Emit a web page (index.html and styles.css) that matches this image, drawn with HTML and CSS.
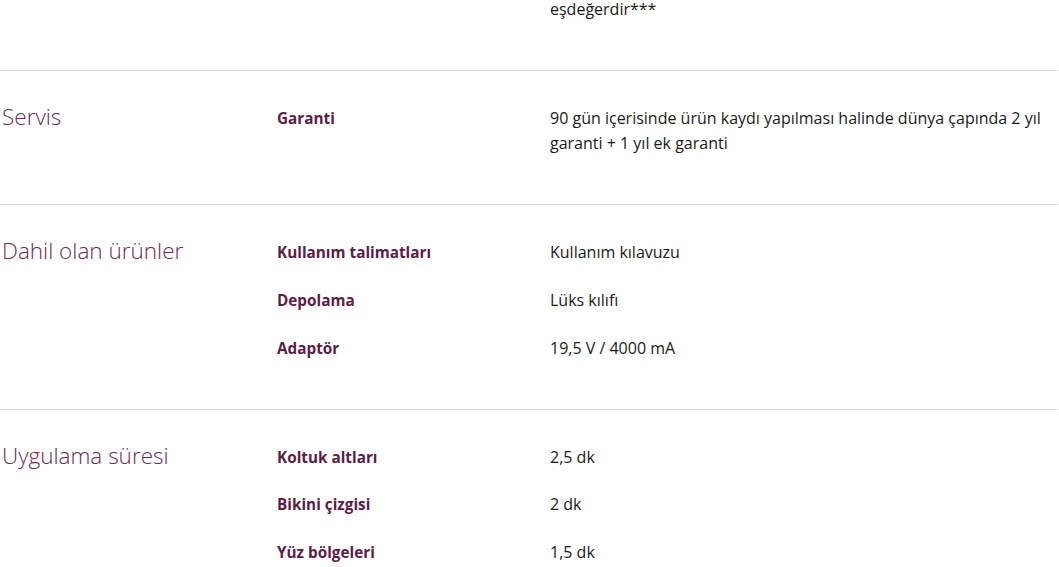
FILE: index.html
```html
<!DOCTYPE html>
<html lang="tr">
<head>
<meta charset="utf-8">
<link rel="stylesheet" href="styles.css">
</head>
<body>
<div class="specs">
  <section class="group group-top">
    <div class="title"></div>
    <div class="rows">
      <div class="row"><div class="label"></div><div class="value">eşdeğerdir***</div></div>
    </div>
  </section>
  <section class="group">
    <h3 class="title">Servis</h3>
    <div class="rows">
      <div class="row"><div class="label">Garanti</div><div class="value">90 gün içerisinde ürün kaydı yapılması halinde dünya çapında 2 yıl garanti + 1 yıl ek garanti</div></div>
    </div>
  </section>
  <section class="group">
    <h3 class="title">Dahil olan ürünler</h3>
    <div class="rows">
      <div class="row"><div class="label">Kullanım talimatları</div><div class="value">Kullanım kılavuzu</div></div>
      <div class="row"><div class="label">Depolama</div><div class="value">Lüks kılıfı</div></div>
      <div class="row"><div class="label">Adaptör</div><div class="value">19,5 V / 4000 mA</div></div>
    </div>
  </section>
  <section class="group">
    <h3 class="title">Uygulama süresi</h3>
    <div class="rows">
      <div class="row"><div class="label">Koltuk altları</div><div class="value">2,5 dk</div></div>
      <div class="row"><div class="label">Bikini çizgisi</div><div class="value">2 dk</div></div>
      <div class="row"><div class="label">Yüz bölgeleri</div><div class="value">1,5 dk</div></div>
    </div>
  </section>
</div>
</body>
</html>
```

FILE: styles.css
```css
html, body {
  margin: 0;
  padding: 0;
  background: #fff;
}
body {
  font-family: "Open Sans", "Noto Sans", sans-serif;
  color: #111;
}
.specs {
  width: 1058px;
}
.group {
  display: grid;
  grid-template-columns: 277px 1fr;
  padding: 35px 0 48px 0;
  border-top: 1px solid #d9d9d9;
}
.group-top {
  border-top: none;
  padding-top: 0;
  padding-bottom: 48px;
  margin-top: -3px;
}
.title {
  margin: 0 0 0 2px;
  font-weight: 300;
  font-size: 22.5px;
  line-height: 28px;
  color: #6a2a57;
  margin-top: -3px;
}
.rows {
  display: flex;
  flex-direction: column;
  gap: 22.8px;
}
.row {
  display: grid;
  grid-template-columns: 273px 1fr;
  line-height: 25px;
}
.label {
  font-weight: 700;
  font-size: 15.3px;
  color: #5b1d48;
}
.value {
  font-size: 16px;
  color: #1a1a1a;
  padding-right: 8px;
}
```
